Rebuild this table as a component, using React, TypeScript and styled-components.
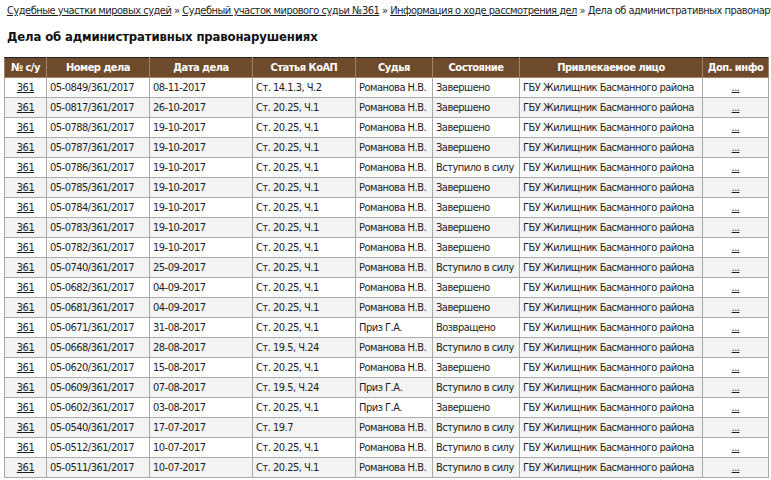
import styled, { createGlobalStyle } from 'styled-components';

const GlobalStyle = createGlobalStyle`
  body {
    margin: 0;
    background: #fff;
    font-family: "DejaVu Sans Condensed", "DejaVu Sans", Verdana, sans-serif;
    font-stretch: condensed;
    font-size: 11px;
    letter-spacing: -0.5px;
    color: #1e1e1e;
  }
`;

type Row = [string, string, string, string, string];

const R = 'Романова Н.В.';
const P = 'Приз Г.А.';
const A = 'Ст. 20.25, Ч.1';
const Z = 'Завершено';
const V = 'Вступило в силу';

const rows: Row[] = [
  ['05-0849/361/2017', '08-11-2017', 'Ст. 14.1.3, Ч.2', R, Z],
  ['05-0817/361/2017', '26-10-2017', A, R, Z],
  ['05-0788/361/2017', '19-10-2017', A, R, Z],
  ['05-0787/361/2017', '19-10-2017', A, R, Z],
  ['05-0786/361/2017', '19-10-2017', A, R, V],
  ['05-0785/361/2017', '19-10-2017', A, R, Z],
  ['05-0784/361/2017', '19-10-2017', A, R, Z],
  ['05-0783/361/2017', '19-10-2017', A, R, Z],
  ['05-0782/361/2017', '19-10-2017', A, R, Z],
  ['05-0740/361/2017', '25-09-2017', A, R, V],
  ['05-0682/361/2017', '04-09-2017', A, R, Z],
  ['05-0681/361/2017', '04-09-2017', A, R, Z],
  ['05-0671/361/2017', '31-08-2017', A, P, 'Возвращено'],
  ['05-0668/361/2017', '28-08-2017', 'Ст. 19.5, Ч.24', R, V],
  ['05-0620/361/2017', '15-08-2017', A, R, Z],
  ['05-0609/361/2017', '07-08-2017', 'Ст. 19.5, Ч.24', P, V],
  ['05-0602/361/2017', '03-08-2017', A, P, Z],
  ['05-0540/361/2017', '17-07-2017', 'Ст. 19.7', R, V],
  ['05-0512/361/2017', '10-07-2017', A, R, V],
  ['05-0511/361/2017', '10-07-2017', A, R, V],
];

const widths = [42, 103, 103, 103, 77, 87, 183, 66];
const heads = ['№ с/у', 'Номер дела', 'Дата дела', 'Статья КоАП', 'Судья', 'Состояние', 'Привлекаемое лицо', 'Доп. инфо'];

function App() {
  return (
    <Page>
      <GlobalStyle />
      <Crumbs>
        <Link href="#">Судебные участки мировых судей</Link> »{' '}
        <Link href="#">Судебный участок мирового судьи №361</Link> »{' '}
        <Link href="#">Информация о ходе рассмотрения дел</Link> » Дела об административных правонарушениях
      </Crumbs>
      <Title>Дела об административных правонарушениях</Title>
      <Table>
        <colgroup>
          {widths.map((w, i) => (
            <col key={i} style={{ width: w }} />
          ))}
        </colgroup>
        <thead>
          <tr>
            {heads.map((h) => (
              <Th key={h}>{h}</Th>
            ))}
          </tr>
        </thead>
        <tbody>
          {rows.map((r, i) => (
            <Tr key={r[0]} $odd={i % 2 === 1}>
              <Td $center>
                <Link href="#">361</Link>
              </Td>
              {r.map((c, j) => (
                <Td key={j}>{c}</Td>
              ))}
              <Td>ГБУ Жилищник Басманного района</Td>
              <Td $center>
                <Link href="#">...</Link>
              </Td>
            </Tr>
          ))}
        </tbody>
      </Table>
    </Page>
  );
}

export default App;

const Page = styled.div`
  padding: 4px 0 0 4px;
`;

const Crumbs = styled.div`
  padding-left: 3px;
  white-space: nowrap;
  overflow: hidden;
  line-height: 14px;
`;

const Link = styled.a`
  color: #1e1e1e;
  text-decoration: underline;
`;

const Title = styled.h1`
  margin: 11px 0 12px 3px;
  font-size: 13px;
  font-weight: bold;
  letter-spacing: -0.15px;
  color: #111;
  line-height: 16px;
`;

const Table = styled.table`
  border-collapse: collapse;
  table-layout: fixed;
  width: 764px;
  border: 1px solid #222;
`;

const Th = styled.th`
  background: #6e4b2c;
  color: #fff;
  font-weight: bold;
  height: 19px;
  padding: 0 2px;
  border: 1px solid #a08462;
  border-top-color: #222;
  text-align: center;
  white-space: nowrap;
`;

const Tr = styled.tr<{ $odd: boolean }>`
  background: ${(p) => (p.$odd ? '#f3f3f3' : '#fff')};
`;

const Td = styled.td<{ $center?: boolean }>`
  height: 19px;
  padding: 0 3px;
  border: 1px solid #a9a9a9;
  text-align: ${(p) => (p.$center ? 'center' : 'left')};
  white-space: nowrap;
  overflow: hidden;
`;
